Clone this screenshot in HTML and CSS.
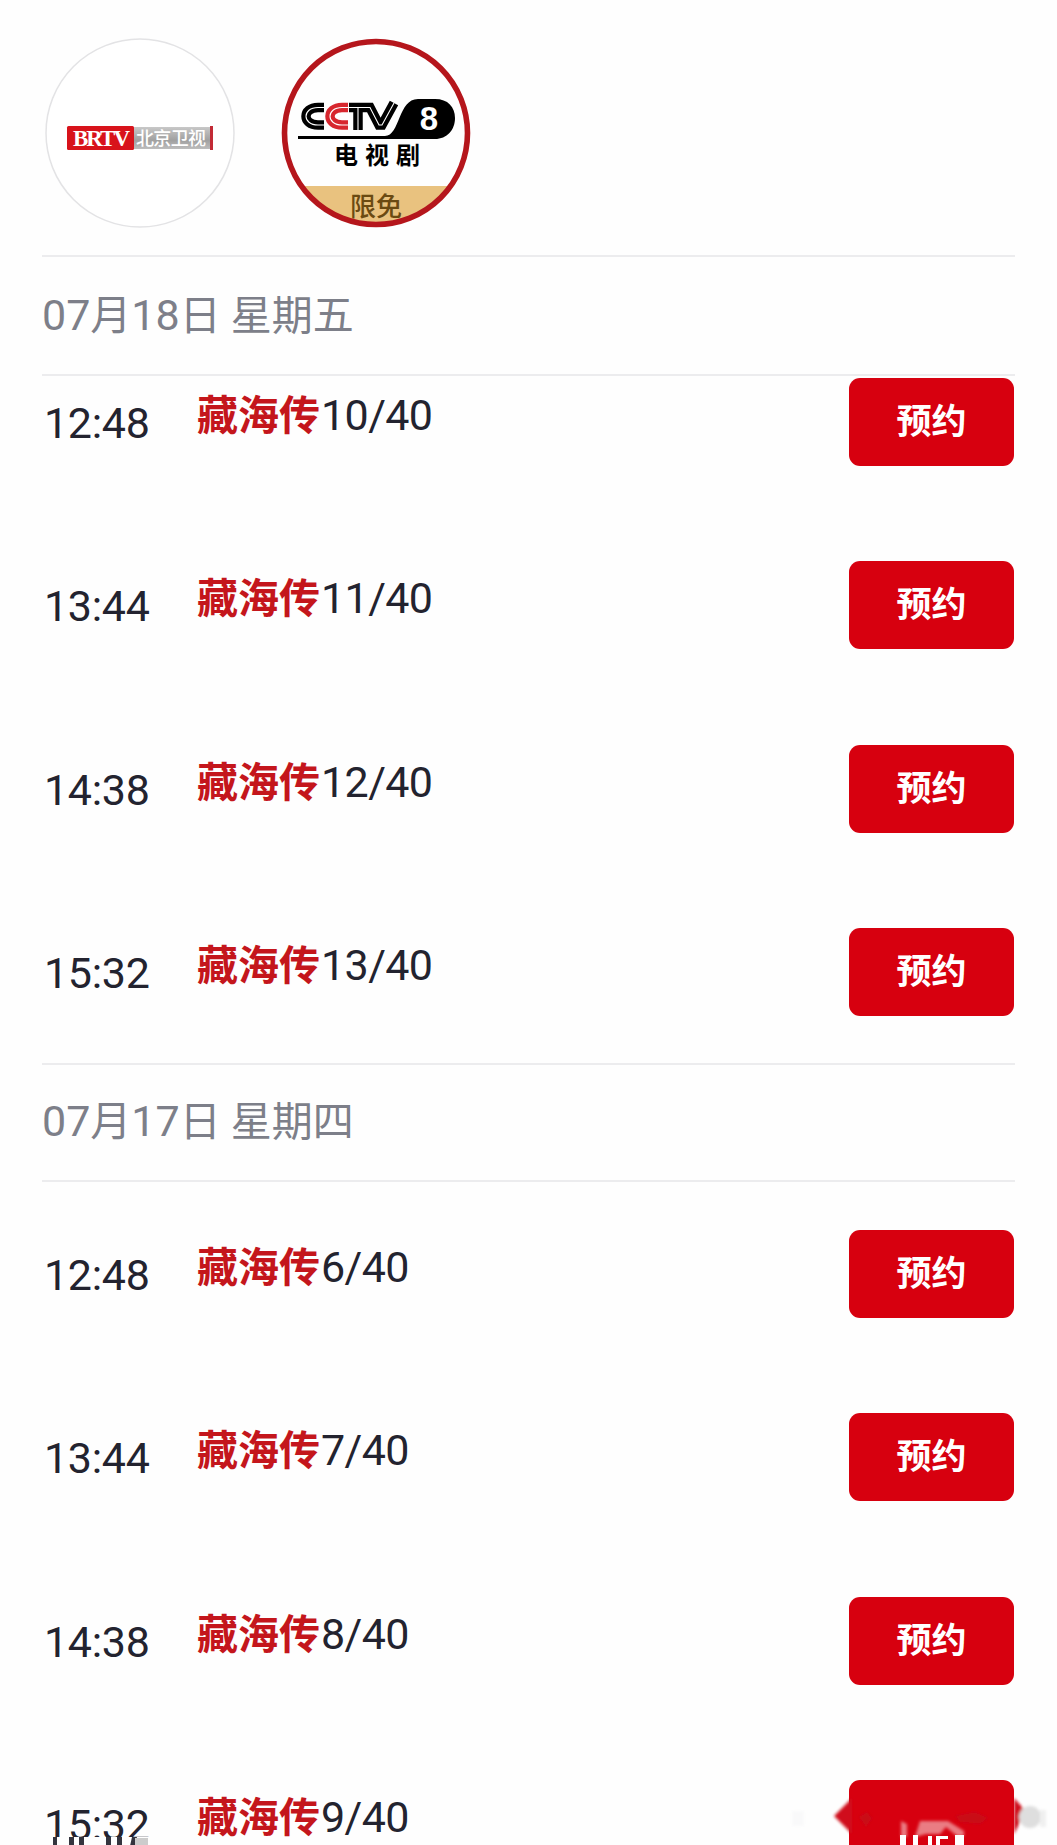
FILE: index.html
```html
<!DOCTYPE html>
<html lang="zh-CN">

<head>
  <meta charset="UTF-8">
  <meta name="viewport" content="width=device-width, initial-scale=1.0">
  <title>节目单</title>
  <link rel="stylesheet" href="styles.css">
</head>

<body>
  <div class="container">
    <div class="channels">
      <svg class="logo" viewBox="0 0 190 190">
        <circle cx="95" cy="95" r="94" fill="#fff" stroke="#e3e3e5" stroke-width="1.5" />
        <defs>
          <linearGradient id="silver" x1="0" y1="0" x2="0" y2="1">
            <stop offset="0" stop-color="#c8c8c8" />
            <stop offset=".6" stop-color="#a0a0a0" />
            <stop offset="1" stop-color="#bdbdbd" />
          </linearGradient>
        </defs>
        <rect x="22" y="88" width="67" height="24" rx="1.5" fill="#d8131b" />
        <rect x="89" y="89" width="76" height="22" fill="url(#silver)" />
        <rect x="165" y="88" width="3" height="24" fill="#c22a35" />
        <text class="brtv" x="28" y="108" textLength="55" lengthAdjust="spacingAndGlyphs">BRTV</text>
        <text class="bj" x="91" y="107" textLength="70">北京卫视</text>
      </svg>
      <svg class="logo" viewBox="0 0 190 190">
        <defs>
          <clipPath id="round">
            <circle cx="95" cy="95" r="92" />
          </clipPath>
        </defs>
        <rect x="0" y="148" width="190" height="42" fill="#e9c27f" clip-path="url(#round)" />
        <g fill="none" stroke="#000" stroke-width="9.5">
          <path d="M43 69.5H37C21 69.5 21 87 37 87H43" />
          <path d="M68 69.5H89L98 87H101L113 65" />
          <path d="M77 70V92" />
          <path d="M67 69.5H61C45 69.5 45 87 61 87H67" stroke="#d7262e" />
        </g>
        <g fill="none" stroke="#fff" stroke-width="1.1">
          <path d="M43 69.5H37C21 69.5 21 87 37 87H43" />
          <path d="M67 69.5H61C45 69.5 45 87 61 87H67" />
          <path d="M68 69.5H89L98 87H101L113 65" />
          <path d="M77 70V92" />
        </g>
        <path d="M17 98H104C119 98 117 61 137 61H154C167 61 174 69 174 80C174 92 166 101 154 101H17Z" fill="#000" />
        <text class="eight" x="148" y="92">8</text>
        <text class="drama" x="53" y="126" textLength="86">电视剧</text>
        <text class="free" x="69" y="178">限免</text>
        <circle cx="95" cy="95" r="91.5" fill="none" stroke="#b5161c" stroke-width="5.6" />
      </svg>
    </div>

    <div class="date"><span>07</span>月<span>18</span>日 星期五</div>
    <div class="list first">
      <div class="item">
        <div class="time">12:48</div>
        <div class="name"><b>藏海传</b>10/40</div>
        <div class="btn">预约</div>
      </div>
      <div class="item">
        <div class="time">13:44</div>
        <div class="name"><b>藏海传</b>11/40</div>
        <div class="btn">预约</div>
      </div>
      <div class="item">
        <div class="time">14:38</div>
        <div class="name"><b>藏海传</b>12/40</div>
        <div class="btn">预约</div>
      </div>
      <div class="item">
        <div class="time">15:32</div>
        <div class="name"><b>藏海传</b>13/40</div>
        <div class="btn">预约</div>
      </div>
    </div>

    <div class="date second"><span>07</span>月<span>17</span>日 星期四</div>
    <div class="list">
      <div class="item">
        <div class="time">12:48</div>
        <div class="name"><b>藏海传</b>6/40</div>
        <div class="btn">预约</div>
      </div>
      <div class="item">
        <div class="time">13:44</div>
        <div class="name"><b>藏海传</b>7/40</div>
        <div class="btn">预约</div>
      </div>
      <div class="item">
        <div class="time">14:38</div>
        <div class="name"><b>藏海传</b>8/40</div>
        <div class="btn">预约</div>
      </div>
      <div class="item last">
        <div class="time">15:32</div>
        <div class="name"><b>藏海传</b>9/40</div>
        <div class="btn"></div>
        <!-- 时间底部的拖影 -->
        <svg class="trail-time" viewBox="0 0 110 9">
          <rect width="110" height="9" fill="#fefefe" />
          <path d="M13 0h4v9h-4zM29 0h5v9h-5zM39 0h5v9h-5zM66 0h5v9h-5zM77 0h5v9h-5zM92 0h5l-2 9h-5z" fill="#34343e" />
          <rect x="95" y="1" width="13" height="8" fill="#ccc" />
        </svg>
        <!-- 按钮两侧和文字的拖影 -->
        <svg class="trail-btn" viewBox="0 0 297 65">
          <defs>
            <filter id="soft">
              <feGaussianBlur stdDeviation="1.5" />
            </filter>
          </defs>
          <g filter="url(#soft)">
            <rect x="32" y="31" width="12" height="15" fill="#f9f9fa" />
            <path d="M92 18L74 36L92 54zM254 18L263 28L259 44L254 54z" fill="#d0101b" />
            <circle cx="270" cy="37" r="11" fill="#dedede" />
            <rect x="280" y="30" width="6" height="17" fill="#f0f0f0" />
            <path d="M99 37l8-5 5 6-6 9zM195 36l20-4 13 6-8 6-20-2z" fill="#c90814" />
            <path d="M141 41L147 44V57H141zM160 41H188L204 51V56H197L186 47L180 54H166L155 57z" fill="#f0a5a9" opacity=".75" />
          </g>
          <path d="M140 55h6v10h-6zM153 55h5v10h-5zM168 56h4v9h-4zM176 56h12v3h-8v6h-4zM195 55h9v10h-9z" fill="#fff" />
        </svg>
      </div>
    </div>
  </div>
</body>

</html>
```
FILE: styles.css
```css
* {
  padding: 0;
  margin: 0;
  box-sizing: border-box;
}

body {
  background: #fefefe;
  font-family: Roboto, "Noto Sans CJK SC", sans-serif;
  color: #23232f;
}

.container {
  height: 1845px;
  padding: 38px 42px 0;
  overflow: hidden;
}

.channels {
  display: flex;
  gap: 46px;
  height: 217px;
  padding-left: 3px;
}

.logo {
  width: 190px;
  height: 190px;
}

.brtv {
  font: bold 23px "Liberation Serif", serif;
  fill: #fff;
  letter-spacing: -2px;
}

.bj {
  font: 500 18px "Noto Sans CJK SC", sans-serif;
  fill: #fff;
}

.eight {
  font: bold 33px "Liberation Sans", sans-serif;
  fill: #fff;
  text-anchor: middle;
}

.drama {
  font: bold 24px "Noto Sans CJK SC", sans-serif;
  fill: #000;
}

.free {
  font: 500 26px "Noto Sans CJK SC", sans-serif;
  fill: #6b4a12;
}

.date {
  height: 121px;
  border-top: 2px solid #ececee;
  border-bottom: 2px solid #ececee;
  font-size: 41px;
  line-height: 116px;
  color: #7d7f89;
  white-space: pre;
}

.date span {
  font-size: 43px;
}

.second {
  height: 119px;
  line-height: 113px;
}

.list {
  padding-top: 48px;
}

.first {
  height: 687px;
  padding-top: 2px;
}

.item {
  display: flex;
  height: 183.3px;
}

.time {
  width: 155px;
  padding: 20px 0 0 2px;
  font-size: 43px;
  line-height: 50px;
  letter-spacing: -0.3px;
}

.name {
  flex: 1;
  padding-top: 12px;
  font-size: 43px;
  line-height: 50px;
  letter-spacing: -0.6px;
}

.name b {
  margin-right: 1px;
  font-size: 41px;
  letter-spacing: 0;
  color: #c4161c;
}

.btn {
  width: 165px;
  height: 88px;
  margin-right: 1px;
  border-radius: 11px;
  background: #d7000f;
  color: #fff;
  font-size: 35px;
  font-weight: bold;
  line-height: 90px;
  text-align: center;
}

.last {
  position: relative;
}

.trail-time {
  position: absolute;
  left: -2px;
  top: 57px;
  width: 110px;
  height: 9px;
}

.trail-btn {
  position: absolute;
  left: 718px;
  top: 0;
  width: 297px;
  height: 65px;
}
```
